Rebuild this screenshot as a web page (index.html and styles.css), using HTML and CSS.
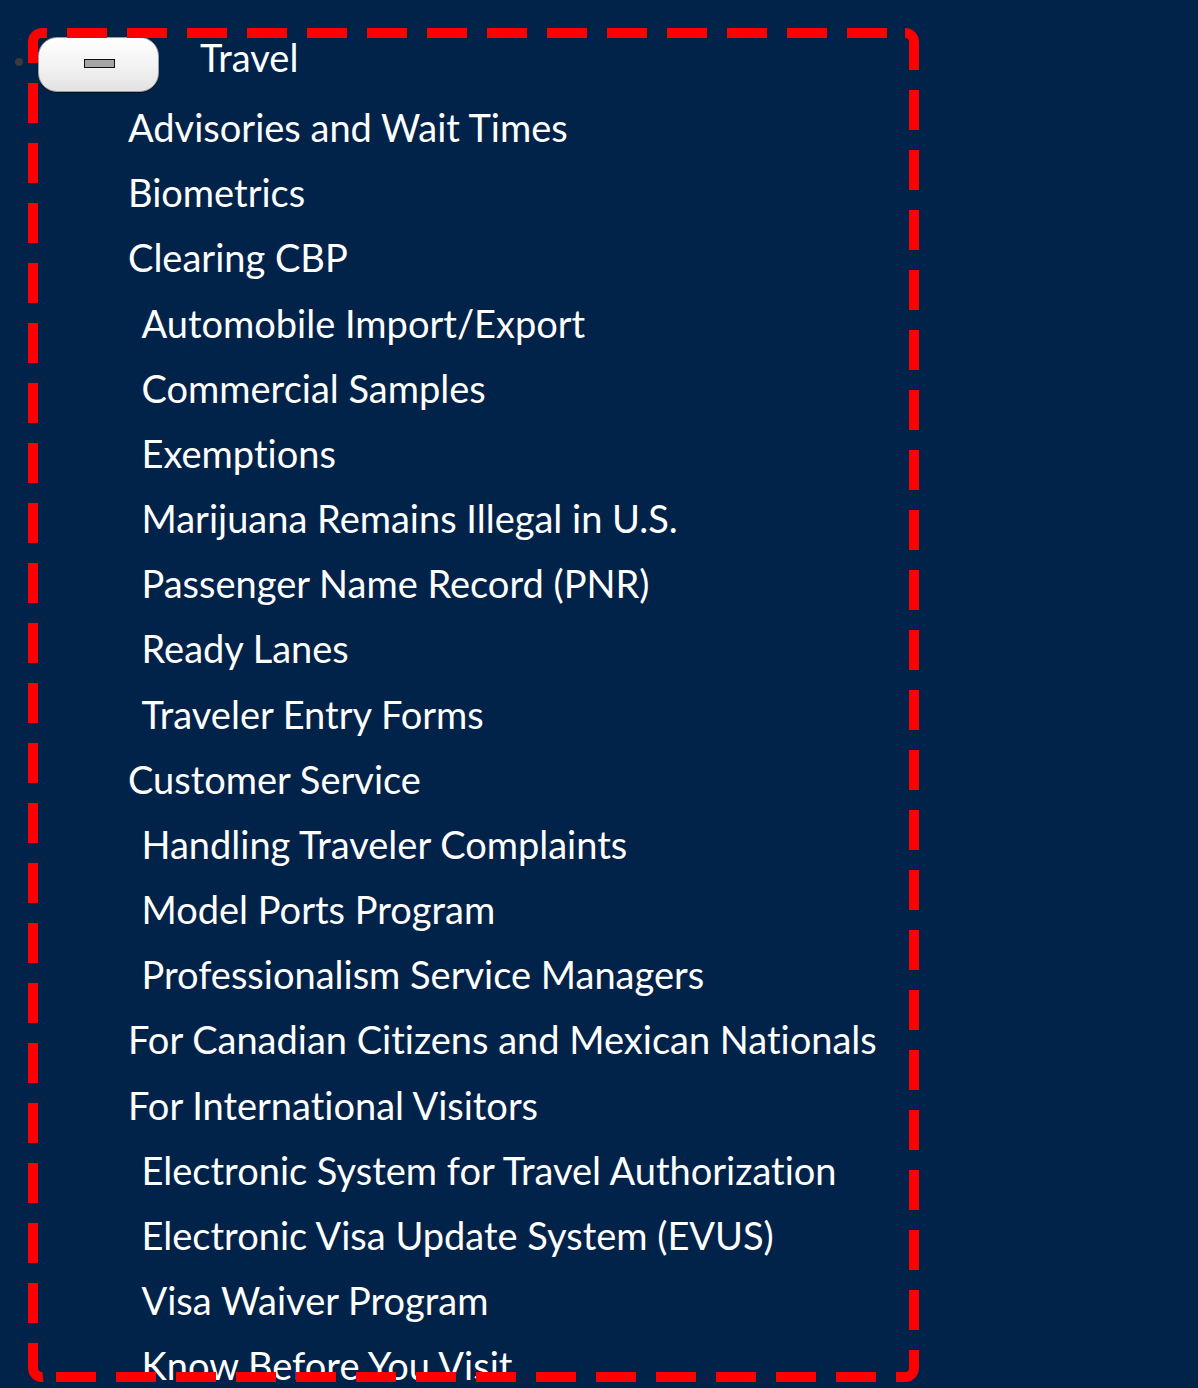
FILE: index.html
```html
<!DOCTYPE html>
<html lang="en">
<head>
<meta charset="utf-8">
<title>Travel</title>
<link rel="stylesheet" href="styles.css">
</head>
<body>
<nav class="nav">
  <div class="nav-head">
    <span class="bullet"></span>
    <button class="toggle" type="button" aria-label="Collapse Travel"><span class="minus"></span></button>
    <span class="head-label">Travel</span>
  </div>
  <ul class="menu">
    <li class="l1">Advisories and Wait Times</li>
    <li class="l1">Biometrics</li>
    <li class="l1">Clearing CBP</li>
    <li class="l2">Automobile Import/Export</li>
    <li class="l2">Commercial Samples</li>
    <li class="l2">Exemptions</li>
    <li class="l2">Marijuana Remains Illegal in U.S.</li>
    <li class="l2">Passenger Name Record (PNR)</li>
    <li class="l2">Ready Lanes</li>
    <li class="l2">Traveler Entry Forms</li>
    <li class="l1">Customer Service</li>
    <li class="l2">Handling Traveler Complaints</li>
    <li class="l2">Model Ports Program</li>
    <li class="l2">Professionalism Service Managers</li>
    <li class="l1">For Canadian Citizens and Mexican Nationals</li>
    <li class="l1">For International Visitors</li>
    <li class="l2">Electronic System for Travel Authorization</li>
    <li class="l2">Electronic Visa Update System (EVUS)</li>
    <li class="l2">Visa Waiver Program</li>
    <li class="l2">Know Before You Visit</li>
  </ul>
</nav>
<svg class="focus-ring" width="1198" height="1388" viewBox="0 0 1198 1388" aria-hidden="true">
  <g fill="none" stroke="#ff0000" stroke-width="10">
    <path d="M33 63 V42 A9 9 0 0 1 42 33 H47"/>
    <path d="M905 33 A9 9 0 0 1 914 42 V70"/>
    <path d="M914 1350 V1368 A9 9 0 0 1 905 1377 H896"/>
    <path d="M43 1377 A9 9 0 0 1 33 1368 V1343"/>
    <path d="M67 33 H890" stroke-dasharray="40 20"/>
    <path d="M914 90 V1330" stroke-dasharray="40 20"/>
    <path d="M876 1377 H56" stroke-dasharray="40 20"/>
    <path d="M33 83 V1323" stroke-dasharray="40 20"/>
  </g>
</svg>
</body>
</html>
```
FILE: styles.css
```css
html, body {
  margin: 0;
  background: #022349;
}

body {
  padding: 37px 0 0 15px;
  font-family: "Lato", "Liberation Sans", sans-serif;
  font-size: 38px;
  font-variant-ligatures: none;
  color: #ffffff;
  overflow: hidden;
  height: 1388px;
  box-sizing: border-box;
}

.nav {
  display: block;
}

.nav-head {
  display: flex;
  align-items: flex-start;
}

.bullet {
  width: 8px;
  height: 8px;
  border-radius: 50%;
  background: #3a3a3a;
  margin-top: 21px;
  margin-right: 15px;
  flex: none;
}

.toggle {
  width: 121px;
  height: 55px;
  box-sizing: border-box;
  padding: 0;
  margin: 0;
  border: 1px solid #9c9c9c;
  border-radius: 19px;
  background: linear-gradient(#ffffff 0%, #f2f2f2 55%, #e2e2e2 100%);
  box-shadow: 0 1px 1px rgba(0, 0, 0, 0.55);
  display: flex;
  align-items: center;
  justify-content: center;
  flex: none;
}

.minus {
  display: block;
  width: 31px;
  height: 9px;
  box-sizing: border-box;
  border: 1.5px solid #111111;
  background: #a6a6a6;
  margin: -2px 0 0 2px;
}

.head-label {
  margin-left: 41px;
  line-height: 40px;
}

.menu {
  list-style: none;
  margin: 3px 0 0;
  padding: 0;
  line-height: 65.17px;
  white-space: nowrap;
}

.l1 {
  padding-left: 113px;
}

.l2 {
  padding-left: 126.5px;
}

.focus-ring {
  position: absolute;
  top: 0;
  left: 0;
  pointer-events: none;
}
```
